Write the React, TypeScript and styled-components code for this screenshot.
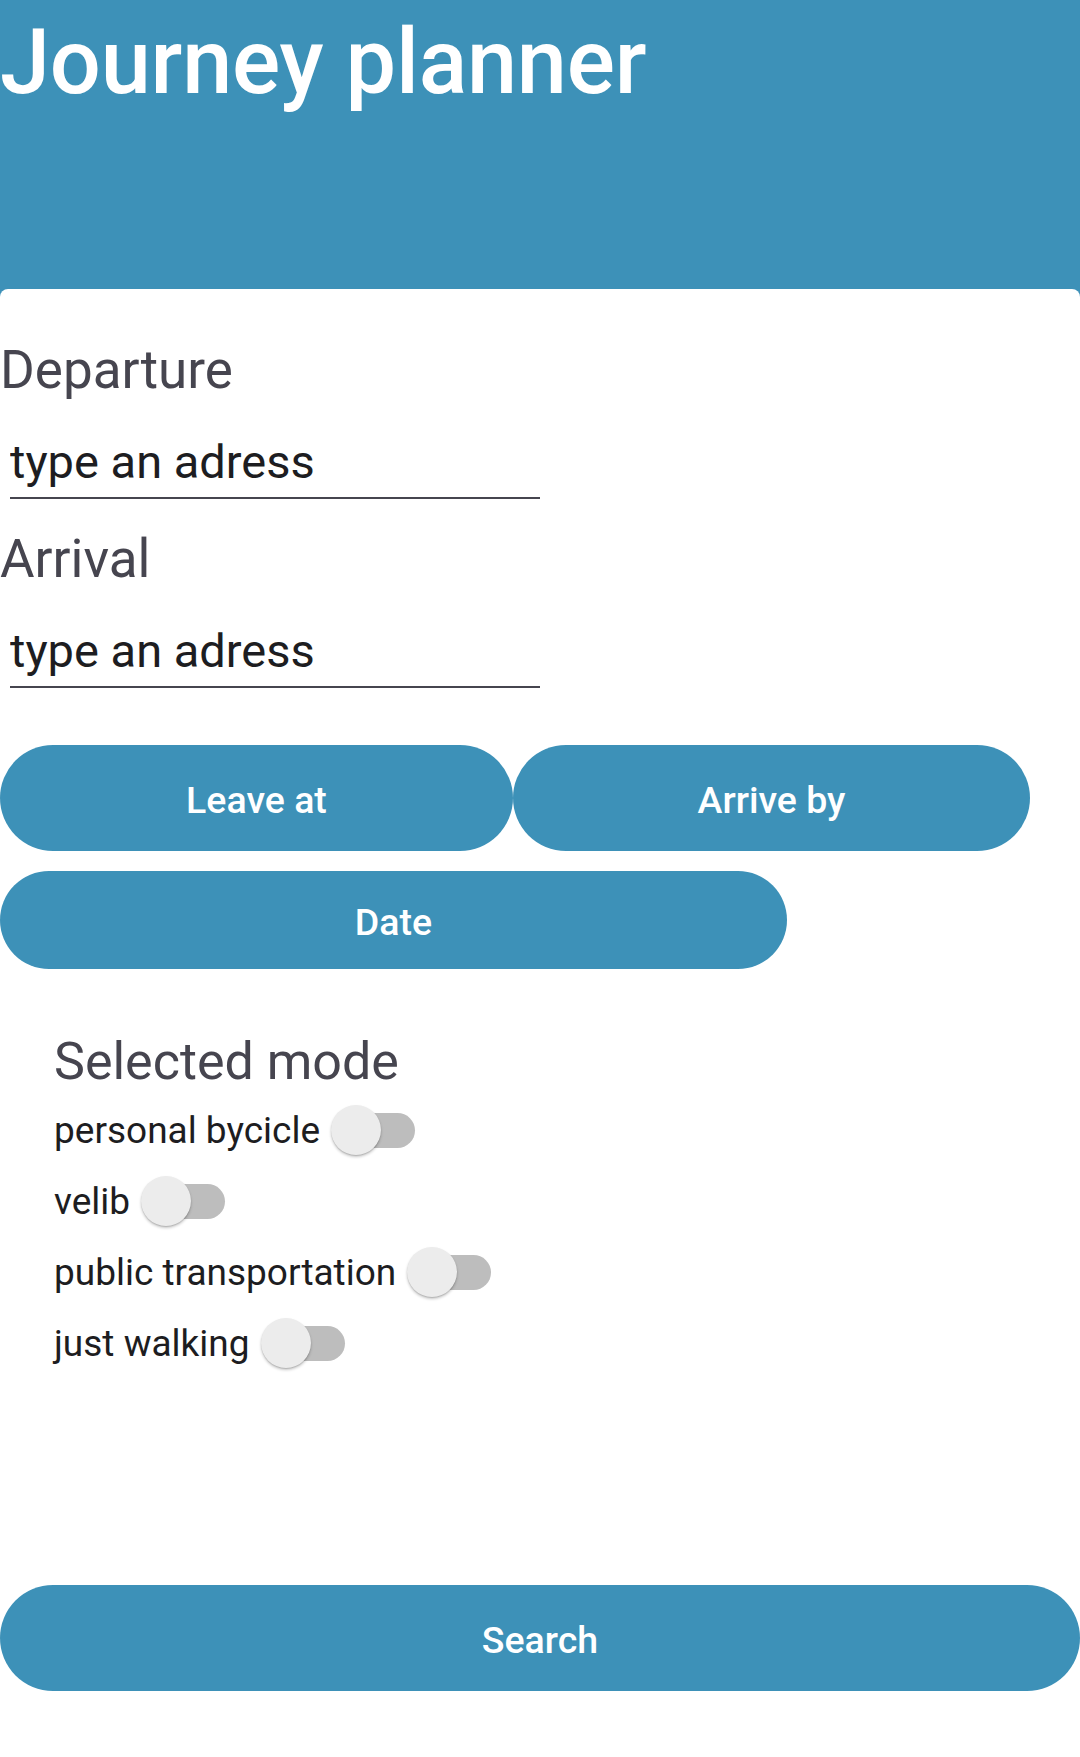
import styled, { createGlobalStyle } from "styled-components";

const blue = "#3d91b8";
const labelGray = "#46454f";

const GlobalStyle = createGlobalStyle`
  html, body {
    margin: 0;
    padding: 0;
    background: #ffffff;
  }
  body {
    font-family: Roboto, "Liberation Sans", sans-serif;
  }
  * {
    box-sizing: border-box;
  }
`;

const modes = ["personal bycicle", "velib", "public transportation", "just walking"];

const App = () => {
  return (
    <Page>
      <GlobalStyle />
      <Header>
        <Title>Journey planner</Title>
      </Header>

      <Content>
        <Field>
          <FieldLabel>Departure</FieldLabel>
          <AddressInput placeholder="type an adress" />
        </Field>
        <Field>
          <FieldLabel>Arrival</FieldLabel>
          <AddressInput placeholder="type an adress" />
        </Field>

        <ButtonRow>
          <PillButton $height={106}>Leave at</PillButton>
          <PillButton $height={106}>Arrive by</PillButton>
        </ButtonRow>
        <DateRow>
          <PillButton $height={98}>Date</PillButton>
        </DateRow>

        <ModeList>
          <ModeTitle>Selected mode</ModeTitle>
          {modes.map((mode) => (
            <ModeRow key={mode}>
              <ModeLabel>{mode}</ModeLabel>
              <Toggle role="switch" aria-checked={false} aria-label={mode}>
                <Track />
                <Knob />
              </Toggle>
            </ModeRow>
          ))}
        </ModeList>

        <SearchButton $height={106}>Search</SearchButton>
      </Content>
    </Page>
  );
};

export default App;

const Page = styled.div`
  width: 1080px;
  min-height: 1757px;
  background: #ffffff;
`;

const Header = styled.header`
  height: 297px;
  padding-top: 9px;
  background: ${blue};
`;

const Title = styled.h1`
  margin: 0;
  font-size: 90px;
  line-height: 108px;
  font-weight: 500;
  color: #ffffff;
  letter-spacing: -0.2px;
`;

const Content = styled.main`
  position: relative;
  margin-top: -8px;
  padding-top: 50px;
  background: #ffffff;
  border-radius: 8px 8px 0 0;
  display: flex;
  flex-direction: column;
`;

const Field = styled.div`
  display: flex;
  flex-direction: column;
  align-items: flex-start;

  & + & {
    margin-top: 29px;
  }
`;

const FieldLabel = styled.label`
  font-size: 53px;
  line-height: 62px;
  font-weight: 400;
  color: ${labelGray};
  margin-bottom: 32px;
`;

const AddressInput = styled.input`
  margin-left: 10px;
  width: 530px;
  padding: 0 0 8px;
  border: none;
  border-bottom: 2px solid ${labelGray};
  outline: none;
  background: transparent;
  font-family: Roboto, "Liberation Sans", sans-serif;
  font-size: 47px;
  line-height: 56px;
  height: 66px;
  color: #1d1d21;

  &::placeholder {
    color: #1d1d21;
    opacity: 1;
  }
`;

const ButtonRow = styled.div`
  display: grid;
  grid-template-columns: 513px 517px;
  margin-top: 57px;
`;

const DateRow = styled.div`
  display: grid;
  grid-template-columns: 787px;
  margin-top: 20px;
`;

const PillButton = styled.button<{ $height: number }>`
  height: ${(p) => p.$height}px;
  border: none;
  border-radius: 999px;
  background: ${blue};
  color: #ffffff;
  font-family: Roboto, "Liberation Sans", sans-serif;
  font-size: 37.5px;
  font-weight: 500;
  cursor: pointer;
  padding: 4px 0 0;
`;

const SearchButton = styled(PillButton)`
  width: 1080px;
  margin-top: 206px;
`;

const ModeList = styled.section`
  margin-top: 63px;
  padding-left: 54px;
  display: flex;
  flex-direction: column;
`;

const ModeTitle = styled.h2`
  margin: 0 0 3px;
  font-size: 52px;
  line-height: 60px;
  font-weight: 400;
  color: ${labelGray};
`;

const ModeRow = styled.div`
  display: flex;
  align-items: center;
  height: 71px;
`;

const ModeLabel = styled.span`
  font-size: 37px;
  line-height: 44px;
  color: #1d1d21;
`;

const Toggle = styled.div`
  position: relative;
  width: 84px;
  height: 52px;
  margin-left: 11px;
`;

const Track = styled.span`
  position: absolute;
  left: 12px;
  right: 0;
  top: 8px;
  height: 35px;
  border-radius: 18px;
  background: #bdbdbd;
`;

const Knob = styled.span`
  position: absolute;
  left: 0;
  top: 0;
  width: 50px;
  height: 50px;
  border-radius: 50%;
  background: #ececec;
  box-shadow: 0 2px 3px rgba(0, 0, 0, 0.22), 0 1px 1px rgba(0, 0, 0, 0.12);
`;
